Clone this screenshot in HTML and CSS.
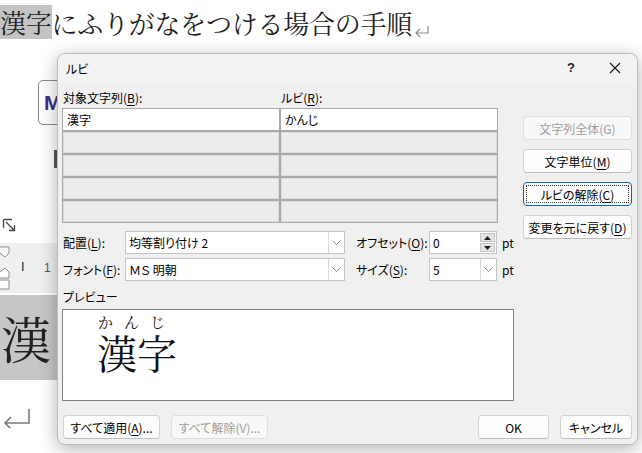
FILE: index.html
```html
<!DOCTYPE html>
<html lang="ja">
<head>
<meta charset="utf-8">
<title>ルビ</title>
<link rel="stylesheet" href="styles.css">
</head>
<body>
<div class="page">
  <div class="heading"><span class="hl">漢字</span>にふりがなをつける場合の手順<svg class="pret" width="16" height="13" viewBox="0 0 16 13"><path d="M14 1V8H2M6 4L2 8L6 12" fill="none" stroke="#8a8a8a" stroke-width="1.2"/></svg></div>
  <div class="side">
    <div class="ribbon">
      <div class="vline"></div>
      <div class="rcol">
        <div class="mbtn">M</div>
        <div class="darkbar"></div>
      </div>
    </div>
    <svg class="launcher" width="15" height="15" viewBox="0 0 15 15"><path d="M1.5 1.5H10M1.5 1.5V10M4 4L12.5 12.5M12.5 7V12.5H7" fill="none" stroke="#444" stroke-width="1.3"/></svg>
    <svg class="ruler" width="57" height="50" viewBox="0 0 57 50">
      <rect width="57" height="50" fill="#efefef"/>
      <path d="M0 4H9V10L5 14L0 10" fill="#fff" stroke="#8c8c8c"/>
      <path d="M0 29L5 25L9 29V35H0" fill="#fff" stroke="#8c8c8c"/>
      <path d="M0 37H9V46H0" fill="#fff" stroke="#8c8c8c"/>
      <rect x="22" y="19" width="1.6" height="9" fill="#555"/>
      <text x="44" y="29" font-family="Liberation Sans, sans-serif" font-size="12" fill="#555">1</text>
    </svg>
    <div class="bigline">漢</div>
    <svg class="bigret" width="30" height="20" viewBox="0 0 30 20"><path d="M27 1V15H3M9 9L3 15L9 21" fill="none" stroke="#7a7a7a" stroke-width="1.6"/></svg>
  </div>
</div>

<div class="dialog">
  <div class="titlebar">
    <div class="title">ルビ</div>
    <div class="tbtn help">?</div>
    <div class="tbtn"><svg width="12" height="12" viewBox="0 0 12 12"><path d="M1 1L11 11M11 1L1 11" stroke="#1a1a1a" stroke-width="1.2"/></svg></div>
  </div>
  <div class="body">
    <div class="main">
      <div class="labels">
        <div class="lab1">対象文字列(<u>B</u>):</div>
        <div class="lab2">ルビ(<u>R</u>):</div>
      </div>
      <div class="grid">
        <div class="cell on">漢字</div><div class="cell on">かんじ</div>
        <div class="cell"></div><div class="cell"></div>
        <div class="cell"></div><div class="cell"></div>
        <div class="cell"></div><div class="cell"></div>
        <div class="cell"></div><div class="cell"></div>
      </div>
      <div class="frow frow1">
        <div class="flabel">配置(<u>L</u>):</div>
        <div class="combo wide"><div class="val">均等割り付け 2</div><div class="dd"><svg width="9" height="5" viewBox="0 0 9 5"><path d="M0.5 0.5L4.5 4.5L8.5 0.5" fill="none" stroke="#8a8a8a"/></svg></div></div>
        <div class="flabel2">オフセット(<u>O</u>):</div>
        <div class="combo small"><div class="val">0</div><div class="spin"><div class="sp"><svg width="7" height="4" viewBox="0 0 7 4"><path d="M0 4L3.5 0L7 4Z" fill="#222"/></svg></div><div class="sp"><svg width="7" height="4" viewBox="0 0 7 4"><path d="M0 0L3.5 4L7 0Z" fill="#222"/></svg></div></div></div>
        <div class="pt">pt</div>
      </div>
      <div class="frow frow2">
        <div class="flabel">フォント(<u>F</u>):</div>
        <div class="combo wide"><div class="val">ＭＳ 明朝</div><div class="dd"><svg width="9" height="5" viewBox="0 0 9 5"><path d="M0.5 0.5L4.5 4.5L8.5 0.5" fill="none" stroke="#8a8a8a"/></svg></div></div>
        <div class="flabel2">サイズ(<u>S</u>):</div>
        <div class="combo small"><div class="val">5</div><div class="dd"><svg width="9" height="5" viewBox="0 0 9 5"><path d="M0.5 0.5L4.5 4.5L8.5 0.5" fill="none" stroke="#8a8a8a"/></svg></div></div>
        <div class="pt">pt</div>
      </div>
      <div class="plabel">プレビュー</div>
      <div class="preview">
        <div class="rt">かんじ</div>
        <div class="rb">漢字</div>
      </div>
    </div>
    <div class="sbtns">
      <div class="btn dis">文字列全体(G)</div>
      <div class="btn">文字単位(<u>M</u>)</div>
      <div class="btn focus">ルビの解除(<u>C</u>)</div>
      <div class="btn">変更を元に戻す(<u>D</u>)</div>
    </div>
  </div>
  <div class="footer">
    <div class="btn fb">すべて適用(<u>A</u>)...</div>
    <div class="btn fb dis">すべて解除(V)...</div>
    <div class="spacer"></div>
    <div class="btn ok">OK</div>
    <div class="btn cancel">キャンセル</div>
  </div>
</div>
</body>
</html>
```

FILE: styles.css
```css
* { box-sizing: border-box; margin: 0; padding: 0; }
html, body { width: 642px; height: 453px; overflow: hidden; background: #fff; }
body {
  position: relative;
  font-family: "Noto Sans CJK JP", "Noto Sans", sans-serif;
  font-size: 12px;
  color: #000;
}
u { text-decoration: underline; text-underline-offset: 2px; }

/* background document */
.heading {
  margin-top: 5px;
  height: 34px;
  display: flex;
  align-items: center;
  font-family: "Noto Serif CJK JP", "Noto Sans CJK JP", serif;
  font-size: 26px;
  letter-spacing: -0.25px;
  color: #1e1e1e;
  white-space: nowrap;
}
.hl { background: #c4c4c4; height: 34px; line-height: 34px; display: inline-block; }
.pret { margin-left: 2px; align-self: flex-end; margin-bottom: 1px; }

.side { width: 57px; display: flex; flex-direction: column; }
.ribbon { margin-top: 28px; height: 151px; display: flex; padding-left: 22px; }
.vline { width: 1px; height: 151px; background: #c8c8c8; }
.rcol { margin-left: 16px; display: flex; flex-direction: column; }
.mbtn {
  margin-top: 13px;
  width: 30px;
  height: 45px;
  border: 1px solid #8a8a8a;
  border-radius: 5px;
  background: #fff;
  font-family: "Liberation Sans", sans-serif;
  font-weight: bold;
  font-size: 21px;
  line-height: 43px;
  color: #3d2f86;
  padding-left: 5px;
}
.darkbar { margin-top: 25px; margin-left: 16px; width: 3px; height: 18px; background: #555; }
.launcher { margin-left: 2px; display: block; }
.ruler { margin-top: 10px; display: block; }
.bigline {
  margin-top: 2px;
  width: 57px;
  height: 85px;
  line-height: 85px;
  background: #c6c6c6;
  font-family: "Noto Serif CJK JP", "Noto Sans CJK JP", serif;
  font-size: 50px;
  color: #222;
  padding-left: 1px;
  overflow: hidden;
  white-space: nowrap;
}
.bigret { margin-top: 28px; margin-left: 2px; display: block; }

/* dialog */
.dialog {
  position: absolute;
  left: 57px;
  top: 53px;
  width: 581px;
  height: 392px;
  background: #f0f0f0;
  border: 1px solid #bdbdbd;
  border-radius: 8px;
  box-shadow: 0 4px 18px rgba(0, 0, 0, 0.3);
  display: flex;
  flex-direction: column;
  font-feature-settings: "palt";
  white-space: nowrap;
}
.titlebar {
  height: 28px;
  display: flex;
  align-items: center;
  padding-left: 8px;
  background: #f3f3f3;
  border-radius: 8px 8px 0 0;
}
.title { flex: 1; }
.tbtn { width: 44px; height: 28px; display: flex; align-items: center; justify-content: center; }
.help { font-family: "Liberation Sans", sans-serif; font-size: 13px; font-weight: bold; color: #222; padding-bottom: 2px; }

.body { display: flex; padding: 6px 5px 0 4px; gap: 9px; }
.main { width: 452px; display: flex; flex-direction: column; }
.labels { display: flex; height: 18px; align-items: center; }
.lab1 { width: 219px; padding-left: 1px; }
.grid {
  margin-top: 2px;
  width: 436px;
  display: grid;
  grid-template-columns: 216px 216px;
  grid-auto-rows: 21px;
  gap: 2px;
  background: #a9a9a9;
  border: 1px solid #a9a9a9;
}
.cell { background: #ececec; border: 1px solid #dcdcdc; padding-left: 3px; line-height: 19px; }
.cell.on { background: #fff; border-color: #fff; }

.frow { display: flex; align-items: center; height: 23px; }
.frow1 { margin-top: 8px; }
.frow2 { margin-top: 4px; }
.flabel { width: 63px; padding-left: 1px; }
.combo { height: 23px; border: 1px solid #c4c4c4; background: #fff; display: flex; }
.wide { width: 220px; }
.small { width: 68px; }
.val { flex: 1; padding-left: 3px; line-height: 21px; }
.dd { width: 16px; border-left: 1px solid #dadada; display: flex; align-items: center; justify-content: center; }
.spin { width: 16px; display: flex; flex-direction: column; gap: 1px; padding: 1px 1px 1px 0; }
.sp { flex: 1; background: #e4e4e4; border: 1px solid #c6c6c6; display: flex; align-items: center; justify-content: center; }
.flabel2 { margin-left: 11px; width: 73px; }
.pt { margin-left: 5px; }
.plabel { margin-top: 8px; height: 16px; line-height: 16px; padding-left: 1px; }
.preview {
  margin-top: 4px;
  width: 452px;
  height: 92px;
  border: 1px solid #828282;
  background: #fff;
  padding: 3px 0 0 34px;
  font-family: "Noto Serif CJK JP", "Noto Sans CJK JP", serif;
  font-feature-settings: normal;
  color: #111;
}
.rt { font-size: 15px; line-height: 18px; letter-spacing: 11px; padding-left: 1px; }
.rb { font-size: 40px; line-height: 42px; }

.sbtns { width: 109px; display: flex; flex-direction: column; gap: 9px; padding-top: 28px; }
.btn {
  height: 24px;
  border: 1px solid #d2d2d2;
  border-bottom-color: #bdbdbd;
  border-radius: 4px;
  background: #fdfdfd;
  display: flex;
  align-items: center;
  justify-content: center;
}
.btn.dis { color: #9e9e9e; border-color: #dedede; background: #f8f8f8; }
.btn.focus { border: 1px solid #0067c0; position: relative; }
.btn.focus::after { content: ""; position: absolute; inset: 2px; border: 1px dotted #333; }

.footer { display: flex; padding: 0 5px 0 5px; margin-top: 14px; gap: 11px; }
.fb { width: 97px; }
.spacer { flex: 1; }
.ok { width: 71px; }
.cancel { width: 72px; }
```
